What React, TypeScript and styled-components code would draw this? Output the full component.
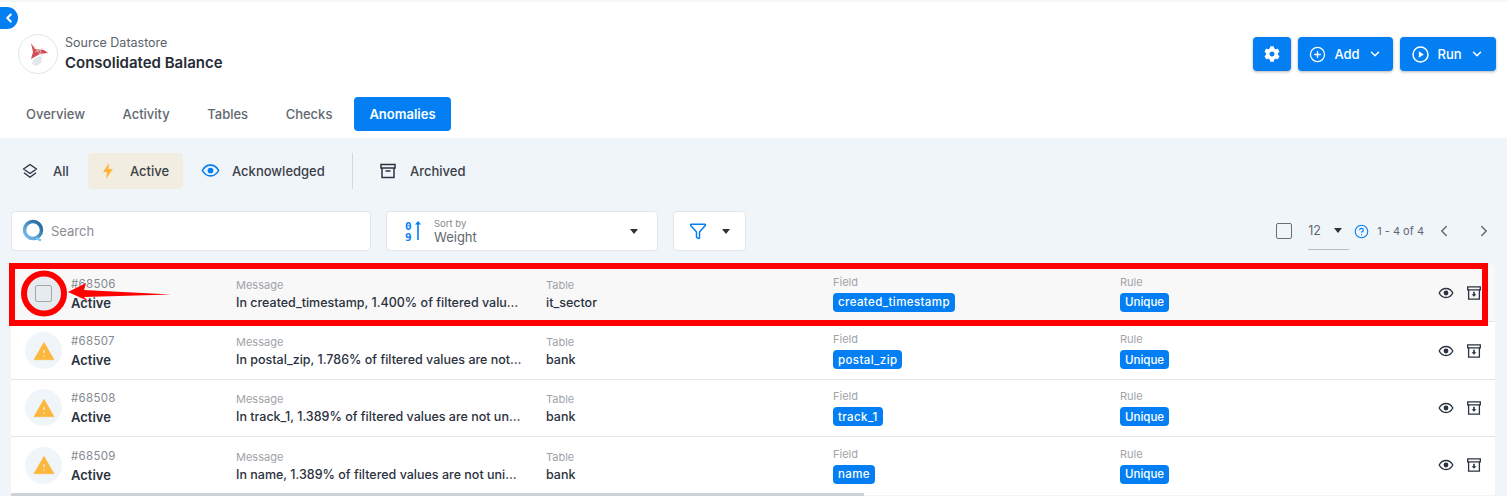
import React from 'react';
import styled, { createGlobalStyle } from 'styled-components';
import {
  ChevronDown,
  ChevronLeft,
  ChevronRight,
  CircleHelp,
  CirclePlus,
  Filter,
} from 'lucide-react';
import { FaCog } from 'react-icons/fa';

const Blue = '#037ff3';
const Ink = '#2b3240';

const GlobalStyle = createGlobalStyle`
  html, body {
    margin: 0;
    padding: 0;
    background: #fff;
  }

  body {
    font-family: Inter, "Noto Sans", "Liberation Sans", sans-serif;
    color: ${Ink};
  }

  * {
    box-sizing: border-box;
  }
`;

const Page = styled.div`
  position: relative;
  width: 1507px;
  height: 496px;
  overflow: hidden;
  background: #fff;
  border-top: 2px solid #f7f7f7;
`;

const BackButton = styled.div`
  position: absolute;
  left: 0;
  top: 5px;
  width: 18px;
  height: 22px;
  display: flex;
  align-items: center;
  justify-content: center;
  background: ${Blue};
  color: #fff;
  border-radius: 0 11px 11px 0;
`;

const Header = styled.header`
  display: flex;
  align-items: flex-start;
  justify-content: space-between;
  padding: 32px 11px 0 18px;
  height: 95px;
`;

const Brand = styled.div`
  display: flex;
  align-items: center;
  gap: 7px;
`;

const Avatar = styled.div`
  width: 40px;
  height: 40px;
  border-radius: 50%;
  border: 1px solid #e3e5e8;
  display: flex;
  align-items: center;
  justify-content: center;
`;

const BrandText = styled.div`
  display: flex;
  flex-direction: column;
  gap: 2px;
`;

const BrandKicker = styled.span`
  font-size: 12.5px;
  line-height: 16px;
  color: #5b616b;
`;

const BrandTitle = styled.span`
  font-size: 15px;
  line-height: 20px;
  font-weight: 600;
  color: #262b35;
`;

const Actions = styled.div`
  display: flex;
  gap: 7px;
  padding-top: 3px;
`;

const ActionButton = styled.button<{ $width: number }>`
  width: ${(p) => p.$width}px;
  height: 34px;
  border: none;
  border-radius: 4px;
  padding: 0;
  display: flex;
  align-items: center;
  justify-content: center;
  gap: 8px;
  background: ${Blue};
  color: #fff;
  font: 500 13px Inter, sans-serif;
  box-shadow: 0 1px 3px rgba(0, 0, 0, 0.3);
`;

const TabBar = styled.nav`
  display: flex;
  gap: 5.5px;
  padding-left: 10px;
  height: 41px;
`;

const Tab = styled.div<{ $active?: boolean }>`
  height: 34px;
  padding: 0 ${(p) => (p.$active ? 15.5 : 16)}px 1px;
  display: flex;
  align-items: center;
  border-radius: 4px;
  font-size: 13px;
  font-weight: ${(p) => (p.$active ? 600 : 500)};
  color: ${(p) => (p.$active ? '#fff' : '#62676f')};
  background: ${(p) => (p.$active ? Blue : 'transparent')};
`;

const Content = styled.main`
  background: #f0f5fa;
  height: 358px;
  padding-top: 15px;
`;

const FilterBar = styled.div`
  display: flex;
  align-items: center;
  height: 36px;
  padding-left: 10px;
`;

const FilterTab = styled.div<{
  $active?: boolean;
  $width: number;
  $pad: number;
  $gap: number;
}>`
  width: ${(p) => p.$width}px;
  height: 36px;
  display: flex;
  align-items: center;
  gap: ${(p) => p.$gap}px;
  padding: 0 0 1px ${(p) => p.$pad}px;
  border-radius: 4px;
  font-size: 13px;
  font-weight: 500;
  color: #3b4048;
  background: ${(p) => (p.$active ? '#f2ede1' : 'transparent')};
`;

const FilterDivider = styled.div`
  width: 1px;
  height: 36px;
  margin: 0 15px 0 -2px;
  background: #d5d9dd;
`;

const Toolbar = styled.div`
  display: flex;
  align-items: center;
  gap: 15px;
  height: 40px;
  margin: 22px 0 14px;
  padding: 0 14px 0 11px;
`;

const Field = styled.div<{ $width: number }>`
  width: ${(p) => p.$width}px;
  height: 40px;
  display: flex;
  align-items: center;
  background: #fff;
  border: 1px solid #e2e6ea;
  border-radius: 4px;
`;

const SearchField = styled(Field)`
  gap: 7px;
  padding-left: 10px;
  font-size: 13px;
  color: #8a8e94;
`;

const SortField = styled(Field)`
  padding: 0 19px 0 18px;
  gap: 11px;
`;

const SortLabels = styled.div`
  flex: 1;
  display: flex;
  flex-direction: column;
  color: #62676f;
`;

const SortKicker = styled.span`
  font-size: 9.5px;
  line-height: 11px;
  color: #85898f;
`;

const SortValue = styled.span`
  font-size: 13px;
  line-height: 16px;
`;

const FilterField = styled(Field)`
  justify-content: center;
  gap: 15px;
`;

const Caret = styled.span`
  width: 0;
  height: 0;
  border-left: 4.5px solid transparent;
  border-right: 4.5px solid transparent;
  border-top: 5px solid #2f3338;
`;

const Pager = styled.div`
  margin-left: auto;
  display: flex;
  align-items: center;
  color: #62676f;
  font-size: 12.5px;
`;

const PagerCheck = styled.span`
  width: 16px;
  height: 16px;
  border: 1.5px solid #6b6f75;
  border-radius: 2px;
  margin-right: 16px;
`;

const PageSize = styled.div`
  width: 41px;
  height: 38px;
  display: flex;
  align-items: center;
  justify-content: space-between;
  padding-right: 7px;
  border-bottom: 1px solid #b9bdc2;
  margin-right: 5px;
`;

const PageRange = styled.span`
  margin: 0 11px 0 8px;
  font-size: 11px;
  white-space: nowrap;
`;

const PagerArrows = styled.div`
  display: flex;
  gap: 22px;
  color: #666b72;
`;

const List = styled.section`
  margin: 0 12px 0 11px;
  background: #fff;
  border-radius: 0 0 6px 6px;
  height: 228px;
`;

const Row = styled.div<{ $selected?: boolean }>`
  display: grid;
  grid-template-columns: 211px 310px 287px 287px 1fr auto;
  align-items: center;
  height: 57.4px;
  padding: 0 14px;
  background: ${(p) => (p.$selected ? '#f8f8f8' : '#fff')};
  border-bottom: 1px solid #e3e5e8;

  &:last-child {
    border-bottom-color: transparent;
  }
`;

const Identity = styled.div`
  display: flex;
  align-items: center;
  gap: 9px;
`;

const IconCircle = styled.div<{ $selected?: boolean }>`
  width: 37px;
  height: 37px;
  border-radius: 50%;
  display: flex;
  align-items: center;
  justify-content: center;
  background: ${(p) => (p.$selected ? '#e6ebef' : '#f0f5fa')};
`;

const RowCheck = styled.span`
  width: 17px;
  height: 17px;
  border: 1.5px solid #a3a8ad;
  border-radius: 2px;
`;

const IdentityText = styled.div`
  display: flex;
  flex-direction: column;
  gap: 3px;
  padding-top: 2px;
`;

const AnomalyId = styled.span`
  font-size: 11.5px;
  line-height: 15px;
  letter-spacing: 0.3px;
  color: #85898f;
`;

const AnomalyStatus = styled.span`
  font-size: 13px;
  line-height: 17px;
  font-weight: 600;
  color: #2b3240;
`;

const TextCell = styled.div`
  display: flex;
  flex-direction: column;
  align-items: flex-start;
  min-width: 0;
  padding-top: 2px;
`;

const ChipCell = styled.div`
  display: flex;
  flex-direction: column;
  align-items: flex-start;
  min-width: 0;
`;

const CellLabel = styled.span`
  font-size: 11px;
  line-height: 14px;
  color: #a0a3a8;
`;

const CellValue = styled.span`
  margin-top: 2px;
  font-size: 12.5px;
  line-height: 17px;
  font-weight: 500;
  color: #2b3240;
  white-space: nowrap;
`;

const MessageValue = styled(CellValue)`
  width: 287px;
  overflow: hidden;
  text-overflow: ellipsis;
`;

const Chip = styled.span`
  margin-top: 4px;
  height: 19px;
  padding: 0 5px;
  display: inline-flex;
  align-items: center;
  border-radius: 4px;
  background: ${Blue};
  color: #fff;
  font-size: 11.5px;
  font-weight: 500;
`;

const FieldChip = styled(Chip)`
  letter-spacing: 0.4px;
`;

const RowActions = styled.div`
  display: flex;
  align-items: center;
  gap: 13px;
`;

const Scrollbar = styled.div`
  margin-left: 11px;
  width: 853px;
  height: 3px;
  background: #cfd3d6;
`;

const HighlightFrame = styled.div`
  position: absolute;
  left: 9px;
  top: 261px;
  width: 1479px;
  height: 63px;
  border: 6px solid #ff0000;
  pointer-events: none;
`;

const Callout = styled.svg`
  position: absolute;
  left: 0;
  top: 250px;
  pointer-events: none;
`;

const SqlLogo = () => (
  <svg width="24" height="26" viewBox="0 0 24 26">
    <path d="M5 2l4 6 9 1 4 3-8 1-9 5 2-7z" fill="#cf4f57" />
    <path d="M8 5l6 8M9 11l8-4M14 9l2 6" stroke="#f2c6c8" strokeWidth="0.8" fill="none" />
    <path d="M7 19l6-4 3 1-1 6-5 3-4-2z" fill="#e4e7ea" />
  </svg>
);

const CirclePlayIcon = () => (
  <svg width="17" height="17" viewBox="0 0 17 17">
    <circle cx="8.5" cy="8.5" r="7.5" fill="none" stroke="#fff" strokeWidth="1.5" />
    <path d="M6.8 5.2l5 3.3-5 3.3z" fill="#fff" />
  </svg>
);

const LayersIcon = () => (
  <svg width="16" height="16" viewBox="0 0 16 16" fill="none" stroke="#2b3240" strokeWidth="1.4">
    <path d="M8 1.5L14.5 6 8 10.5 1.5 6z" strokeLinejoin="round" />
    <path d="M2 9.7L8 14.3l6-4.6" strokeLinejoin="round" />
  </svg>
);

const BoltIcon = () => (
  <svg width="10" height="16" viewBox="0 0 10 16">
    <path d="M6 0L0 9h4l-1 7 7-10H5.5z" fill="#ffb43a" />
  </svg>
);

const EyeIcon = ({ color, size }: { color: string; size: number }) => (
  <svg width={size} height={size} viewBox="0 0 24 24" fill="none">
    <path
      d="M1.8 12C4 7.6 7.7 5.2 12 5.2s8 2.4 10.2 6.8c-2.2 4.4-5.9 6.8-10.2 6.8S4 16.4 1.8 12z"
      stroke={color}
      strokeWidth="2"
    />
    <circle cx="12" cy="12" r="3.6" fill={color} />
  </svg>
);

const ArchiveIcon = () => (
  <svg width="16" height="16" viewBox="0 0 16 16" fill="none" stroke="#2b3240" strokeWidth="1.5">
    <path d="M1 1.5h14v3.5H1z" />
    <path d="M2 5v9.5h12V5M5.5 8h5" />
  </svg>
);

const RowArchiveIcon = () => (
  <svg width="14" height="14" viewBox="0 0 14 14" fill="none">
    <path d="M.7.8h12.6v3H.7z" stroke="#2b3240" strokeWidth="1.3" />
    <path d="M1.6 3.8v9.4h10.8V3.8" stroke="#2b3240" strokeWidth="1.3" />
    <path d="M6.2 5.8h1.6v2.4h1.6L7 10.8 4.6 8.2h1.6z" fill="#2b3240" />
  </svg>
);

const SearchLogo = () => (
  <svg width="22" height="24" viewBox="0 0 22 24" fill="none">
    <defs>
      <linearGradient id="searchRing" x1="0" y1="1" x2="1" y2="0">
        <stop offset="0" stopColor="#7cc4f2" />
        <stop offset="1" stopColor="#1a5f94" />
      </linearGradient>
    </defs>
    <circle cx="11" cy="11" r="8.5" stroke="url(#searchRing)" strokeWidth="3.5" />
    <path d="M14 19l5 2.5" stroke="#7cc4f2" strokeWidth="2.5" />
  </svg>
);

const SortIcon = () => (
  <svg width="18" height="24" viewBox="0 0 18 24" fill={Blue}>
    <text x="0" y="10.5" fontFamily="DejaVu Sans Mono, monospace" fontWeight="700" fontSize="11">
      0
    </text>
    <text x="0" y="21.5" fontFamily="DejaVu Sans Mono, monospace" fontWeight="700" fontSize="11">
      9
    </text>
    <path d="M12.2 21V5.5H10l3-3.5 3 3.5h-2.2V21z" />
  </svg>
);

const WarningIcon = () => (
  <svg width="22" height="22" viewBox="0 0 24 24">
    <path
      d="M1 21.5h22L12 2.5zM13 18.5h-2v-2h2zM13 14.5h-2v-4h2z"
      fill="#fdb73c"
      stroke="#fdb73c"
      strokeWidth="0.6"
      strokeLinejoin="round"
      fillRule="evenodd"
    />
  </svg>
);

const anomalies = [
  {
    id: 68506,
    message: 'In created_timestamp, 1.400% of filtered values are not unique.',
    table: 'it_sector',
    field: 'created_timestamp',
    selected: true,
  },
  {
    id: 68507,
    message: 'In postal_zip, 1.786% of filtered values are not unique.',
    table: 'bank',
    field: 'postal_zip',
  },
  {
    id: 68508,
    message: 'In track_1, 1.389% of filtered values are not unique.',
    table: 'bank',
    field: 'track_1',
  },
  {
    id: 68509,
    message: 'In name, 1.389% of filtered values are not unique.',
    table: 'bank',
    field: 'name',
  },
];

export default function App() {
  return (
    <Page>
      <GlobalStyle />
      <BackButton>
        <ChevronLeft size={14} strokeWidth={3.5} />
      </BackButton>

      <Header>
        <Brand>
          <Avatar>
            <SqlLogo />
          </Avatar>
          <BrandText>
            <BrandKicker>Source Datastore</BrandKicker>
            <BrandTitle>Consolidated Balance</BrandTitle>
          </BrandText>
        </Brand>
        <Actions>
          <ActionButton $width={38}>
            <FaCog size={16} />
          </ActionButton>
          <ActionButton $width={95}>
            <CirclePlus size={17} strokeWidth={1.8} />
            Add
            <ChevronDown size={14} strokeWidth={2.6} />
          </ActionButton>
          <ActionButton $width={96}>
            <CirclePlayIcon />
            Run
            <ChevronDown size={14} strokeWidth={2.6} />
          </ActionButton>
        </Actions>
      </Header>

      <TabBar>
        <Tab>Overview</Tab>
        <Tab>Activity</Tab>
        <Tab>Tables</Tab>
        <Tab>Checks</Tab>
        <Tab $active>Anomalies</Tab>
      </TabBar>

      <Content>
        <FilterBar>
          <FilterTab $width={78} $pad={12} $gap={15}>
            <LayersIcon />
            All
          </FilterTab>
          <FilterTab $active $width={95} $pad={15} $gap={17}>
            <BoltIcon />
            Active
          </FilterTab>
          <FilterTab $width={171} $pad={18} $gap={12}>
            <EyeIcon color={Blue} size={19} />
            Acknowledged
          </FilterTab>
          <FilterDivider />
          <FilterTab $width={120} $pad={12} $gap={14}>
            <ArchiveIcon />
            Archived
          </FilterTab>
        </FilterBar>

        <Toolbar>
          <SearchField $width={360}>
            <SearchLogo />
            Search
          </SearchField>
          <SortField $width={272}>
            <SortIcon />
            <SortLabels>
              <SortKicker>Sort by</SortKicker>
              <SortValue>Weight</SortValue>
            </SortLabels>
            <Caret />
          </SortField>
          <FilterField $width={73}>
            <Filter size={18} color={Blue} strokeWidth={2} />
            <Caret />
          </FilterField>
          <Pager>
            <PagerCheck />
            <PageSize>
              12
              <Caret />
            </PageSize>
            <CircleHelp size={15} color={Blue} strokeWidth={1.8} />
            <PageRange>1 - 4 of 4</PageRange>
            <PagerArrows>
              <ChevronLeft size={18} />
              <ChevronRight size={18} />
            </PagerArrows>
          </Pager>
        </Toolbar>

        <List>
          {anomalies.map((item) => (
            <Row key={item.id} $selected={item.selected}>
              <Identity>
                <IconCircle $selected={item.selected}>
                  {item.selected ? <RowCheck /> : <WarningIcon />}
                </IconCircle>
                <IdentityText>
                  <AnomalyId>#{item.id}</AnomalyId>
                  <AnomalyStatus>Active</AnomalyStatus>
                </IdentityText>
              </Identity>
              <TextCell>
                <CellLabel>Message</CellLabel>
                <MessageValue>{item.message}</MessageValue>
              </TextCell>
              <TextCell>
                <CellLabel>Table</CellLabel>
                <CellValue>{item.table}</CellValue>
              </TextCell>
              <ChipCell>
                <CellLabel>Field</CellLabel>
                <FieldChip>{item.field}</FieldChip>
              </ChipCell>
              <ChipCell>
                <CellLabel>Rule</CellLabel>
                <Chip>Unique</Chip>
              </ChipCell>
              <RowActions>
                <EyeIcon color="#2b3240" size={16} />
                <RowArchiveIcon />
              </RowActions>
            </Row>
          ))}
        </List>
        <Scrollbar />
      </Content>

      <HighlightFrame />
      <Callout width="200" height="80" viewBox="0 250 200 80">
        <circle cx="44" cy="291.5" r="20" fill="none" stroke="#ff0000" strokeWidth="6" />
        <path d="M68 290l18-9-2 7 87 4.5-87 2.5 4 4z" fill="#ff0000" />
      </Callout>
    </Page>
  );
}
